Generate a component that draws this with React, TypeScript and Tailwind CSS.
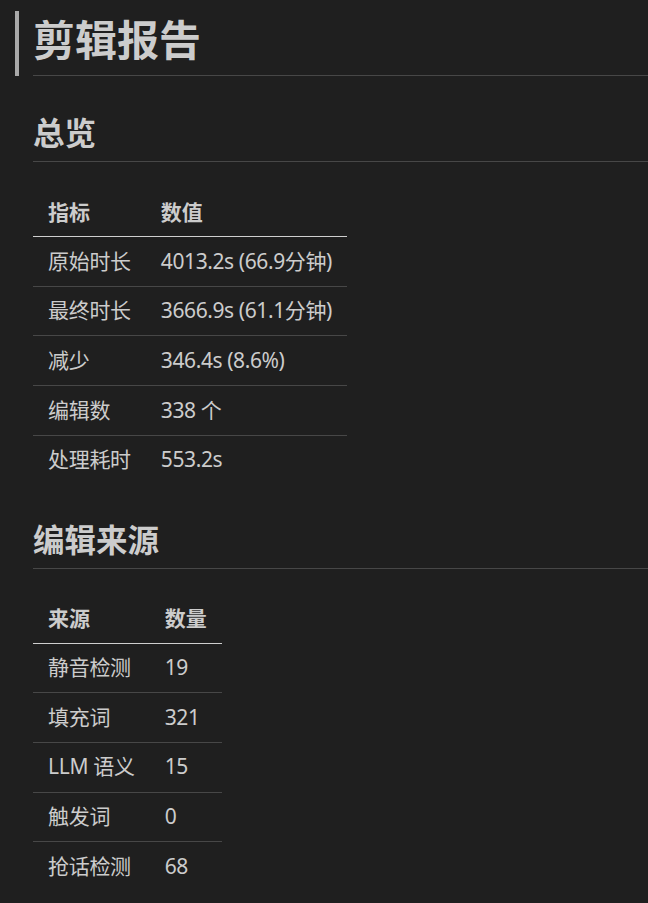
import React from 'react';

type Row = [string, string];

const overview: Row[] = [
  ['原始时长', '4013.2s (66.9分钟)'],
  ['最终时长', '3666.9s (61.1分钟)'],
  ['减少', '346.4s (8.6%)'],
  ['编辑数', '338 个'],
  ['处理耗时', '553.2s'],
];

const sources: Row[] = [
  ['静音检测', '19'],
  ['填充词', '321'],
  ['LLM 语义', '15'],
  ['触发词', '0'],
  ['抢话检测', '68'],
];

// simple markdown-ish table, borders only between rows
const ReportTable = ({ head, rows }: { head: Row; rows: Row[] }) => (
  <table className="mt-[26px] border-collapse text-[21px]">
    <thead>
      <tr className="border-b-[1.5px] border-[#cfcfcf]">
        {head.map((h) => (
          <th key={h} className="px-[15px] py-[7.5px] text-left font-bold leading-[33px]">
            {h}
          </th>
        ))}
      </tr>
    </thead>
    <tbody>
      {rows.map(([k, v], i) => (
        <tr key={k} className={i > 0 ? 'border-t border-[#474747]' : ''}>
          <td className="px-[15px] py-[7.5px] leading-[33.7px] whitespace-nowrap tracking-[-0.3px]">{k}</td>
          <td className="px-[15px] py-[7.5px] leading-[33.7px] whitespace-nowrap tracking-[-0.4px]">{v}</td>
        </tr>
      ))}
    </tbody>
  </table>
);

const SectionTitle = ({ children, className = '' }: { children: React.ReactNode; className?: string }) => (
  <h2
    className={`border-b border-[#474747] pb-[9px] text-[31.5px] font-bold leading-[38px] text-[#cccccc] ${className}`}
  >
    {children}
  </h2>
);

export default function App() {
  return (
    <div
      className="min-h-screen bg-[#1f1f1f] pt-[11px] text-[#cccccc]"
      style={{ fontFamily: '"Noto Sans", "Noto Sans CJK SC", sans-serif' }}
    >
      {/* active line marker sits on the h1 */}
      <div className="ml-[15px] border-l-4 border-[#a9a9a9] pl-[14px]">
        <h1 className="border-b border-[#474747] pb-[10px] pt-[4px] text-[42px] font-bold leading-[50px]">
          剪辑报告
        </h1>
      </div>

      <div className="pl-[33px]">
        <SectionTitle className="mt-[38px]">总览</SectionTitle>
        <ReportTable head={['指标', '数值']} rows={overview} />

        <SectionTitle className="mt-[36px]">编辑来源</SectionTitle>
        <ReportTable head={['来源', '数量']} rows={sources} />
      </div>
    </div>
  );
}
